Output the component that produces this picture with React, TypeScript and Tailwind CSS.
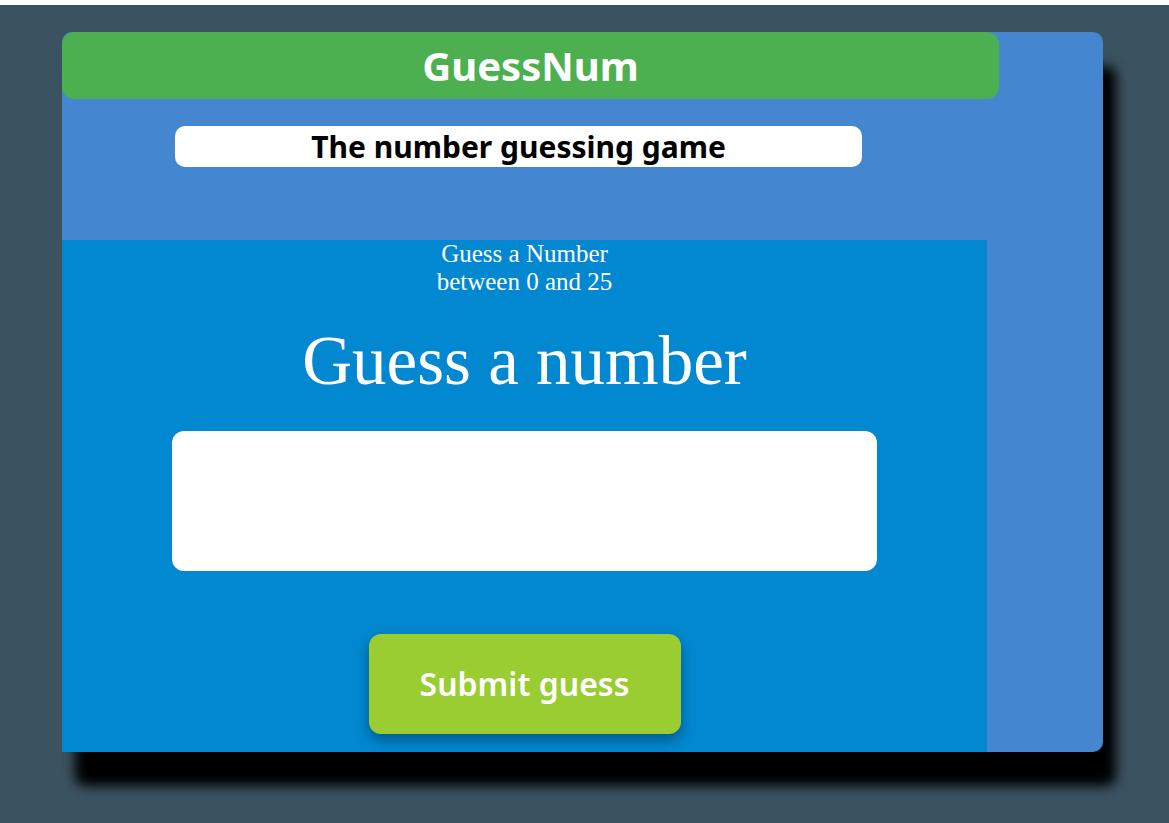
export default function App() {
  return (
    <div className="min-h-[823px] bg-white pt-[5px]">
      <div className="h-[818px] bg-[#3b5260] pt-[27px] pl-[62px]">
        <div className="w-[1041px] h-[720px] rounded-[10px] bg-[#4487d0] shadow-[13px_34px_12px_#000] flex flex-col">
          <header className="w-[937px] h-[67px] shrink-0 rounded-[12px] bg-[#4caf50] flex items-center justify-center">
            <h1 className="font-['Noto_Sans',sans-serif] font-bold text-[40px] text-white leading-none">
              GuessNum
            </h1>
          </header>

          <div className="w-[937px] pt-[27px] pl-[113px]">
            <div className="w-[687px] h-[41px] rounded-[10px] bg-white flex items-center justify-center">
              <h2 className="font-['Noto_Sans',sans-serif] font-bold text-[30px] text-black leading-none">
                The number guessing game
              </h2>
            </div>
          </div>

          <main className="mt-[73px] w-[925px] flex-1 bg-[#0288d1] flex flex-col items-center font-['Liberation_Serif',serif] text-white">
            <p className="text-[25px] leading-[28px] text-center">
              Guess a Number
              <br />
              between 0 and 25
            </p>
            <label className="text-[69px] leading-none mt-[31px]">Guess a number</label>
            <input
              type="text"
              className="mt-[35px] w-[705px] h-[140px] rounded-[12px] bg-white outline-none"
            />
            <button className="mt-[63px] w-[312px] h-[100px] rounded-[12px] bg-[#9acd32] shadow-[0_6px_14px_rgba(0,0,0,0.35)] font-['Noto_Sans',sans-serif] font-semibold text-[32px] text-white">
              Submit guess
            </button>
          </main>
        </div>
      </div>
    </div>
  );
}
